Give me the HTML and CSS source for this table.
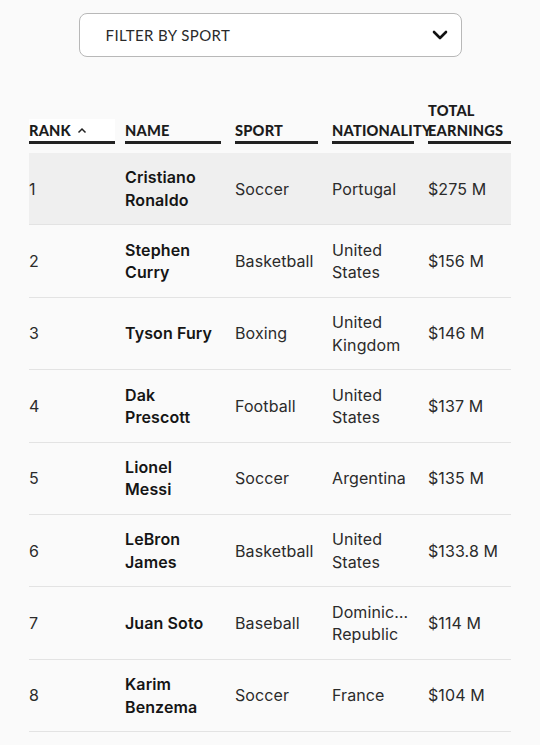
FILE: index.html
```html
<!DOCTYPE html>
<html lang="en">
<head>
<meta charset="utf-8">
<title>Highest-paid athletes</title>
<link rel="stylesheet" href="styles.css">
</head>
<body>
  <div class="filter">
    <span class="filter-label">FILTER BY SPORT</span>
    <svg class="chevron" width="16" height="10" viewBox="0 0 16 10"><polyline points="2,2 8,8 14,2" fill="none" stroke="#111" stroke-width="2.6" stroke-linecap="round" stroke-linejoin="round"/></svg>
  </div>

  <div class="table">
    <div class="head">
      <div class="th th-rank"><span class="th-label rank-label">RANK <svg class="caret" width="10" height="7" viewBox="0 0 10 7"><polyline points="1.5,5.5 5,2 8.5,5.5" fill="none" stroke="#222" stroke-width="1.5"/></svg></span></div>
      <div class="th th-name"><span class="th-label">NAME</span></div>
      <div class="th th-sport"><span class="th-label">SPORT</span></div>
      <div class="th th-nat"><span class="th-label">NATIONALITY</span></div>
      <div class="th th-earn"><span class="th-label">TOTAL EARNINGS</span></div>
    </div>

    <div class="row active">
      <div class="td rank">1</div>
      <div class="td name">Cristiano Ronaldo</div>
      <div class="td sport">Soccer</div>
      <div class="td nat">Portugal</div>
      <div class="td earn">$275 M</div>
    </div>
    <div class="row">
      <div class="td rank">2</div>
      <div class="td name">Stephen Curry</div>
      <div class="td sport">Basketball</div>
      <div class="td nat">United States</div>
      <div class="td earn">$156 M</div>
    </div>
    <div class="row">
      <div class="td rank">3</div>
      <div class="td name">Tyson Fury</div>
      <div class="td sport">Boxing</div>
      <div class="td nat">United Kingdom</div>
      <div class="td earn">$146 M</div>
    </div>
    <div class="row">
      <div class="td rank">4</div>
      <div class="td name">Dak Prescott</div>
      <div class="td sport">Football</div>
      <div class="td nat">United States</div>
      <div class="td earn">$137 M</div>
    </div>
    <div class="row">
      <div class="td rank">5</div>
      <div class="td name">Lionel Messi</div>
      <div class="td sport">Soccer</div>
      <div class="td nat">Argentina</div>
      <div class="td earn">$135 M</div>
    </div>
    <div class="row">
      <div class="td rank">6</div>
      <div class="td name">LeBron James</div>
      <div class="td sport">Basketball</div>
      <div class="td nat">United States</div>
      <div class="td earn">$133.8 M</div>
    </div>
    <div class="row">
      <div class="td rank">7</div>
      <div class="td name">Juan Soto</div>
      <div class="td sport">Baseball</div>
      <div class="td nat">Dominican Republic</div>
      <div class="td earn">$114 M</div>
    </div>
    <div class="row">
      <div class="td rank">8</div>
      <div class="td name">Karim Benzema</div>
      <div class="td sport">Soccer</div>
      <div class="td nat">France</div>
      <div class="td earn">$104 M</div>
    </div>
  </div>
</body>
</html>
```

FILE: styles.css
```css
html, body {
  margin: 0;
  padding: 0;
  background: #fafafa;
}

body {
  font-family: Inter, "Liberation Sans", sans-serif;
  color: #222;
}

.filter {
  box-sizing: border-box;
  width: 383px;
  height: 44px;
  margin: 13px auto 0;
  border: 1px solid #b8b8b8;
  border-radius: 8px;
  background: #fff;
  display: flex;
  align-items: center;
  justify-content: space-between;
  padding: 0 13px 0 26px;
}

.filter-label {
  font-family: Lato, "Open Sans", sans-serif;
  font-size: 15px;
  letter-spacing: 0.4px;
  color: #2a2a2a;
}

.chevron {
  display: block;
}

.table {
  margin-top: 44px;
  padding: 0 29px;
}

.head,
.row {
  display: grid;
  grid-template-columns: 96px 110px 97px 96px 83px;
}

.head {
  align-items: end;
  margin-bottom: 9px;
}

.th {
  padding-right: 14px;
  min-width: 0;
}

.th-rank {
  padding-right: 10px;
}

.th-earn {
  padding-right: 0;
}

.th-label {
  display: block;
  font-family: Lato, "Open Sans", sans-serif;
  font-weight: 900;
  font-size: 14.6px;
  line-height: 20px;
  letter-spacing: 0.2px;
  color: #1c1c1c;
  border-bottom: 3px solid #222;
}

.th-nat .th-label {
  white-space: nowrap;
}

.rank-label {
  background: #fff;
  padding-top: 2px;
}

.caret {
  display: inline-block;
  vertical-align: 2px;
  margin-left: 2px;
}

.row {
  border-bottom: 1px solid #e3e3e3;
  align-items: center;
}

.row.active {
  background: #efefef;
}

.td {
  padding: 13.3px 14px 13.3px 0;
  font-size: 16px;
  line-height: 22.4px;
  letter-spacing: 0.1px;
  color: #2b2b2b;
  min-width: 0;
}

.td.rank {
  padding-right: 10px;
}

.td.earn {
  padding-right: 0;
}

.td.name {
  font-weight: 600;
  color: #151515;
}

.td.nat {
  padding-right: 17px;
  overflow: hidden;
  text-overflow: ellipsis;
}
```
